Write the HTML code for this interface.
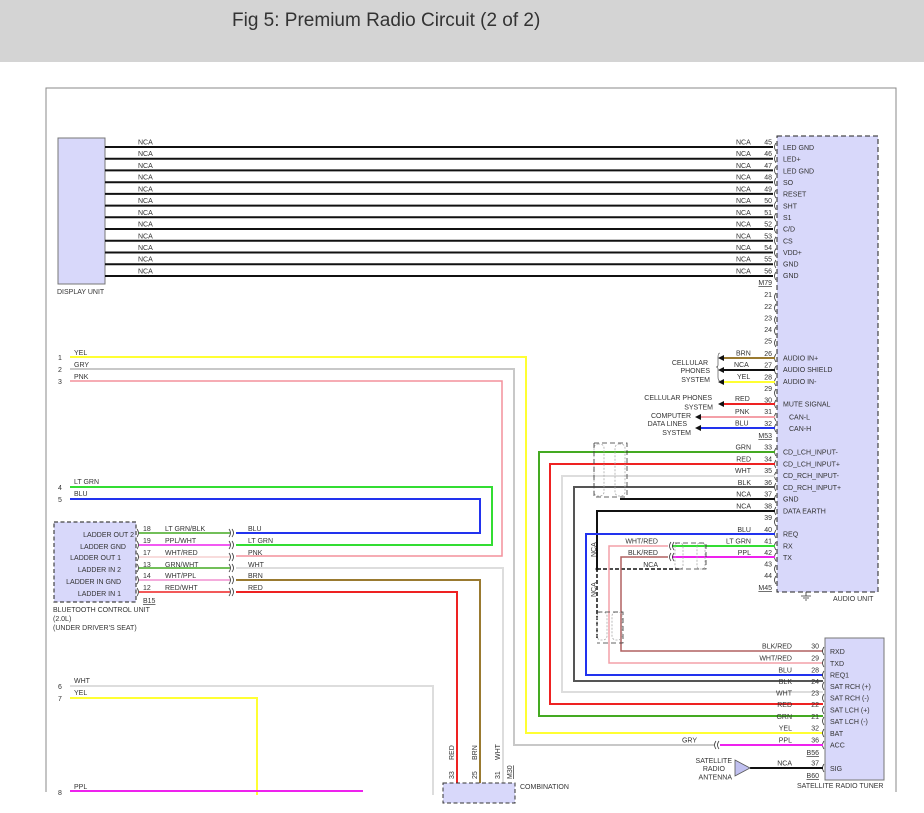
<!DOCTYPE html>
<html><head><meta charset="utf-8"><style>
html,body{margin:0;padding:0;background:#fff;width:924px;height:813px;overflow:hidden}
.hd{position:absolute;left:0;top:0;width:924px;height:62px;background:#d4d4d4}
.hd span{position:absolute;left:232px;top:10px;font:19px "Liberation Sans",sans-serif;color:#333}
svg{position:absolute;left:0;top:0}
text{font-family:"Liberation Sans",sans-serif;font-size:7px;fill:#333}
.e{text-anchor:end}
</style></head><body>
<div class="hd"><span>Fig 5: Premium Radio Circuit (2 of 2)</span></div>
<svg width="924" height="813" viewBox="0 0 924 813">
<path d="M46 792V88H896V792" fill="none" stroke="#888" stroke-width="1"/>
<rect x="58" y="138" width="47" height="146" fill="#d8d8fa" stroke="#777"/>
<text x="57" y="294">DISPLAY UNIT</text>
<g stroke="#111" stroke-width="2">
<path d="M105 147H773M105 158.7H773M105 170.4H773M105 182.2H773M105 193.9H773M105 205.6H773M105 217.3H773M105 229H773M105 240.8H773M105 252.5H773M105 264.2H773M105 276H773"/>
</g>
<rect x="777" y="136" width="101" height="456" fill="#d8d8fa" stroke="#222" stroke-dasharray="5,3"/>
<g>
<text x="138" y="144.5">NCA</text><text x="138" y="156">NCA</text><text x="138" y="168">NCA</text><text x="138" y="179.5">NCA</text><text x="138" y="191.5">NCA</text><text x="138" y="203">NCA</text><text x="138" y="215">NCA</text><text x="138" y="226.5">NCA</text><text x="138" y="238.5">NCA</text><text x="138" y="250">NCA</text><text x="138" y="261.5">NCA</text><text x="138" y="273.5">NCA</text>
<text x="736" y="144.5">NCA</text><text x="736" y="156">NCA</text><text x="736" y="168">NCA</text><text x="736" y="179.5">NCA</text><text x="736" y="191.5">NCA</text><text x="736" y="203">NCA</text><text x="736" y="215">NCA</text><text x="736" y="226.5">NCA</text><text x="736" y="238.5">NCA</text><text x="736" y="250">NCA</text><text x="736" y="261.5">NCA</text><text x="736" y="273.5">NCA</text>
<text x="772" y="144.5" class="e">45</text><text x="772" y="156" class="e">46</text><text x="772" y="168" class="e">47</text><text x="772" y="179.5" class="e">48</text><text x="772" y="191.5" class="e">49</text><text x="772" y="203" class="e">50</text><text x="772" y="215" class="e">51</text><text x="772" y="226.5" class="e">52</text><text x="772" y="238.5" class="e">53</text><text x="772" y="250" class="e">54</text><text x="772" y="261.5" class="e">55</text><text x="772" y="273.5" class="e">56</text>
<text x="772" y="285" class="e" text-decoration="underline">M79</text>
<text x="772" y="297" class="e">21</text><text x="772" y="309" class="e">22</text><text x="772" y="320.5" class="e">23</text><text x="772" y="332" class="e">24</text><text x="772" y="343.5" class="e">25</text>
<text x="772" y="356" class="e">26</text><text x="772" y="367.5" class="e">27</text><text x="772" y="379.5" class="e">28</text><text x="772" y="391" class="e">29</text><text x="772" y="402.5" class="e">30</text><text x="772" y="414" class="e">31</text><text x="772" y="426" class="e">32</text>
<text x="772" y="438" class="e" text-decoration="underline">M53</text>
<text x="772" y="449.5" class="e">33</text><text x="772" y="461.5" class="e">34</text><text x="772" y="473" class="e">35</text><text x="772" y="485" class="e">36</text><text x="772" y="496.5" class="e">37</text><text x="772" y="508.5" class="e">38</text><text x="772" y="520" class="e">39</text><text x="772" y="532" class="e">40</text><text x="772" y="543.5" class="e">41</text><text x="772" y="555" class="e">42</text><text x="772" y="566.5" class="e">43</text><text x="772" y="578" class="e">44</text>
<text x="772" y="590" class="e" text-decoration="underline">M45</text>
<text x="783" y="150">LED GND</text><text x="783" y="161.5">LED+</text><text x="783" y="173.5">LED GND</text><text x="783" y="185">SO</text><text x="783" y="196.5">RESET</text><text x="783" y="208.5">SHT</text><text x="783" y="220">S1</text><text x="783" y="231.5">C/D</text><text x="783" y="243.5">CS</text><text x="783" y="255">VDD+</text><text x="783" y="266.5">GND</text><text x="783" y="278">GND</text>
<text x="783" y="360.5">AUDIO IN+</text><text x="783" y="372">AUDIO SHIELD</text><text x="783" y="384">AUDIO IN-</text><text x="783" y="406.5">MUTE SIGNAL</text><text x="789" y="419.5">CAN-L</text><text x="789" y="431">CAN-H</text>
<text x="783" y="454.5">CD_LCH_INPUT-</text><text x="783" y="466.5">CD_LCH_INPUT+</text><text x="783" y="478">CD_RCH_INPUT-</text><text x="783" y="490">CD_RCH_INPUT+</text><text x="783" y="501.5">GND</text><text x="783" y="513.5">DATA EARTH</text><text x="783" y="536.5">REQ</text><text x="783" y="548.5">RX</text><text x="783" y="560">TX</text>
<text x="833" y="601">AUDIO UNIT</text>
</g>
<g fill="none" stroke="#333" stroke-width="0.8">
<path d="M776 143q-3 4 0 8M776 154.7q-3 4 0 8M776 166.4q-3 4 0 8M776 178q-3 4 0 8M776 190q-3 4 0 8M776 201.6q-3 4 0 8M776 213.3q-3 4 0 8M776 225q-3 4 0 8M776 236.8q-3 4 0 8M776 248.5q-3 4 0 8M776 260q-3 4 0 8M776 272q-3 4 0 8"/>
<path d="M776 293q-3 4 0 8M776 304q-3 4 0 8M776 316q-3 4 0 8M776 327q-3 4 0 8M776 339q-3 4 0 8M776 354q-3 4 0 8M776 366q-3 4 0 8M776 378q-3 4 0 8M776 389q-3 4 0 8M776 400q-3 4 0 8M776 413q-3 4 0 8M776 424q-3 4 0 8M776 448q-3 4 0 8M776 460q-3 4 0 8M776 472q-3 4 0 8M776 483q-3 4 0 8M776 495q-3 4 0 8M776 507q-3 4 0 8M776 518q-3 4 0 8M776 530q-3 4 0 8M776 542q-3 4 0 8M776 553q-3 4 0 8M776 565q-3 4 0 8M776 576q-3 4 0 8"/>
</g>
<path d="M806 592v4M801 596h10M803 598h6M805 600h2" stroke="#333" stroke-width="0.8"/>
<path d="M724 358H775" stroke="#9a7a30" stroke-width="2"/>
<path d="M724 370H775" stroke="#111" stroke-width="2"/>
<path d="M724 382H775" stroke="#ffff33" stroke-width="2"/>
<path d="M724 404H775" stroke="#ee2222" stroke-width="2"/>
<path d="M700 417H775" stroke="#f4a0a8" stroke-width="2"/>
<path d="M700 428H775" stroke="#2233ee" stroke-width="2"/>
<path d="M718 358l6-3v6zM718 370l6-3v6zM718 382l6-3v6zM718 404l6-3v6zM695 417l6-3v6zM695 428l6-3v6z" fill="#111"/>
<path d="M720 353q-2 0 -2 4v8q0 2 -2 2q2 0 2 2v8q0 4 2 4" fill="none" stroke="#333" stroke-width="0.6"/>
<text x="736" y="355.5">BRN</text><text x="734" y="367">NCA</text><text x="737" y="379">YEL</text><text x="735" y="401">RED</text><text x="735" y="414">PNK</text><text x="735" y="425.5">BLU</text>
<text x="708" y="365" class="e">CELLULAR</text><text x="710" y="373" class="e">PHONES</text><text x="710" y="382" class="e">SYSTEM</text>
<text x="712" y="400" class="e">CELLULAR PHONES</text><text x="713" y="409.5" class="e">SYSTEM</text>
<text x="691" y="418" class="e">COMPUTER</text><text x="687" y="426" class="e">DATA LINES</text><text x="691" y="435" class="e">SYSTEM</text>
<text x="58" y="360">1</text><text x="58" y="372">2</text><text x="58" y="384">3</text>
<text x="74" y="355">YEL</text><text x="74" y="367">GRY</text><text x="74" y="379">PNK</text>
<path d="M70 357H526V733H823" fill="none" stroke="#ffff33" stroke-width="2"/>
<path d="M70 369H514V745H714" fill="none" stroke="#c8c8c8" stroke-width="2"/>
<path d="M70 381H502V556H236" fill="none" stroke="#f4909c" stroke-width="1.5"/>
<text x="58" y="490">4</text><text x="58" y="502">5</text>
<text x="74" y="484">LT GRN</text><text x="74" y="496">BLU</text>
<path d="M70 487H492V545H236" fill="none" stroke="#33dd33" stroke-width="2"/>
<path d="M70 499H480V533H236" fill="none" stroke="#2233ee" stroke-width="2"/>
<rect x="54" y="522" width="82" height="80" fill="#d8d8fa" stroke="#444" stroke-dasharray="4,2.5" stroke-width="1.2"/>
<text x="134" y="537" class="e">LADDER OUT 2</text><text x="126" y="549" class="e">LADDER GND</text><text x="121" y="560" class="e">LADDER OUT 1</text><text x="121" y="572" class="e">LADDER IN 2</text><text x="121" y="584" class="e">LADDER IN GND</text><text x="121" y="596" class="e">LADDER IN 1</text>
<text x="53" y="612">BLUETOOTH CONTROL UNIT</text><text x="53" y="621">(2.0L)</text><text x="53" y="630">(UNDER DRIVER'S SEAT)</text>
<text x="143" y="603" text-decoration="underline">B15</text>
<path d="M139 533H230" stroke="#44aa22" stroke-width="1.5"/>
<path d="M139 545H230" stroke="#ee22ee" stroke-width="1.5"/>
<path d="M139 557H230" stroke="#f6d0d0" stroke-width="1.5"/>
<path d="M139 568H230" stroke="#44aa22" stroke-width="1.5"/>
<path d="M139 580H230" stroke="#f090d0" stroke-width="1.5"/>
<path d="M139 592H230" stroke="#ee2222" stroke-width="1.5"/>
<path d="M236 568H503V785" fill="none" stroke="#dddddd" stroke-width="2"/>
<path d="M236 580H480V785" fill="none" stroke="#9a7a30" stroke-width="2"/>
<path d="M236 592H457V785" fill="none" stroke="#ee2222" stroke-width="2"/>
<g fill="none" stroke="#333" stroke-width="0.8">
<path d="M137 529q3 4 0 8M137 541q3 4 0 8M137 553q3 4 0 8M137 564q3 4 0 8M137 576q3 4 0 8M137 588q3 4 0 8"/>
<path d="M229 529q3 4 0 8M232 529q3 4 0 8M229 541q3 4 0 8M232 541q3 4 0 8M229 553q3 4 0 8M232 553q3 4 0 8M229 564q3 4 0 8M232 564q3 4 0 8M229 576q3 4 0 8M232 576q3 4 0 8M229 588q3 4 0 8M232 588q3 4 0 8"/>
</g>
<text x="143" y="531">18</text><text x="143" y="543">19</text><text x="143" y="555">17</text><text x="143" y="567">13</text><text x="143" y="578">14</text><text x="143" y="590">12</text>
<text x="165" y="531">LT GRN/BLK</text><text x="165" y="543">PPL/WHT</text><text x="165" y="555">WHT/RED</text><text x="165" y="567">GRN/WHT</text><text x="165" y="578">WHT/PPL</text><text x="165" y="590">RED/WHT</text>
<text x="248" y="531">BLU</text><text x="248" y="543">LT GRN</text><text x="248" y="555">PNK</text><text x="248" y="567">WHT</text><text x="248" y="578">BRN</text><text x="248" y="590">RED</text>
<text x="58" y="689">6</text><text x="58" y="701">7</text><text x="58" y="795">8</text>
<text x="74" y="683">WHT</text><text x="74" y="695">YEL</text><text x="74" y="789">PPL</text>
<path d="M70 686H433V795" fill="none" stroke="#dddddd" stroke-width="2"/>
<path d="M70 698H257V795" fill="none" stroke="#ffff33" stroke-width="2"/>
<path d="M70 791H363" stroke="#ee22ee" stroke-width="2"/>
<path d="M775 452H539V716H823" fill="none" stroke="#44aa22" stroke-width="2"/>
<path d="M775 464H550V704H823" fill="none" stroke="#ee2222" stroke-width="2"/>
<path d="M775 476H562V692H823" fill="none" stroke="#dddddd" stroke-width="2"/>
<path d="M775 487H574V681H823" fill="none" stroke="#555" stroke-width="2"/>
<path d="M775 499H620" fill="none" stroke="#111" stroke-width="2"/>
<path d="M775 511H597V568" fill="none" stroke="#111" stroke-width="2"/>
<path d="M597 568V640" fill="none" stroke="#111" stroke-width="1.5" stroke-dasharray="4,2"/>
<path d="M597 569H680" fill="none" stroke="#111" stroke-width="1.5" stroke-dasharray="4,2"/>
<circle cx="597" cy="569" r="1.5" fill="#111"/>
<path d="M775 534H586V675H823" fill="none" stroke="#2233ee" stroke-width="2"/>
<path d="M775 546H672" stroke="#33dd33" stroke-width="2"/>
<path d="M775 557H672" stroke="#ee22ee" stroke-width="2"/>
<path d="M668 546H609V663H823" fill="none" stroke="#f4a0a8" stroke-width="1.5"/>
<path d="M668 557H621V651H823" fill="none" stroke="#b06060" stroke-width="1.5"/>
<g fill="none" stroke="#aaa" stroke-width="0.8" stroke-dasharray="2,1.5">
<rect x="594" y="444" width="10" height="52" rx="4"/><rect x="615" y="444" width="10" height="52" rx="4"/>
<rect x="675" y="543" width="8" height="26" rx="3"/><rect x="697" y="543" width="8" height="26" rx="3"/>
<rect x="597" y="612" width="10" height="28" rx="4"/><rect x="612" y="612" width="10" height="28" rx="4"/>
</g>
<path d="M594 443H627V497M594 443V497H627" fill="none" stroke="#333" stroke-width="0.8" stroke-dasharray="5,3"/>
<path d="M675 543H706V569H675" fill="none" stroke="#333" stroke-width="0.8" stroke-dasharray="5,3"/>
<path d="M597 612H623V643H597" fill="none" stroke="#333" stroke-width="0.8" stroke-dasharray="5,3"/>
<path d="M671 542q-3 4 0 8M674 542q-3 4 0 8M671 553q-3 4 0 8M674 553q-3 4 0 8" fill="none" stroke="#333" stroke-width="0.8"/>
<text x="751" y="449.5" class="e">GRN</text><text x="751" y="461.5" class="e">RED</text><text x="751" y="473" class="e">WHT</text><text x="751" y="485" class="e">BLK</text><text x="751" y="496.5" class="e">NCA</text><text x="751" y="508.5" class="e">NCA</text><text x="751" y="532" class="e">BLU</text><text x="751" y="543.5" class="e">LT GRN</text><text x="751" y="555" class="e">PPL</text>
<text x="658" y="543.5" class="e">WHT/RED</text><text x="658" y="555" class="e">BLK/RED</text><text x="658" y="567" class="e">NCA</text>
<text transform="translate(596 557) rotate(-90)">NCA</text>
<text transform="translate(596 597) rotate(-90)">NCA</text>
<rect x="825" y="638" width="59" height="142" fill="#d8d8fa" stroke="#777"/>
<g fill="none" stroke="#333" stroke-width="0.8">
<path d="M824 647q-3 4 0 8M824 659q-3 4 0 8M824 671q-3 4 0 8M824 682q-3 4 0 8M824 694q-3 4 0 8M824 706q-3 4 0 8M824 717q-3 4 0 8M824 729q-3 4 0 8M824 741q-3 4 0 8M824 764q-3 4 0 8"/>
<path d="M716 741q-3 4 0 8M719 741q-3 4 0 8"/>
</g>
<path d="M720 745H823" stroke="#ee22ee" stroke-width="2"/>
<path d="M750 768H823" stroke="#111" stroke-width="2"/>
<path d="M735 760L750 768L735 776Z" fill="#c0c0f0" stroke="#555" stroke-width="0.8"/>
<text x="830" y="654">RXD</text><text x="830" y="666">TXD</text><text x="830" y="677.5">REQ1</text><text x="830" y="689">SAT RCH (+)</text><text x="830" y="700.5">SAT RCH (-)</text><text x="830" y="712.5">SAT LCH (+)</text><text x="830" y="724">SAT LCH (-)</text><text x="830" y="736">BAT</text><text x="830" y="747.5">ACC</text><text x="830" y="771">SIG</text>
<text x="819" y="648.5" class="e">30</text><text x="819" y="660.5" class="e">29</text><text x="819" y="672.5" class="e">28</text><text x="819" y="684" class="e">24</text><text x="819" y="695.5" class="e">23</text><text x="819" y="707" class="e">22</text><text x="819" y="719" class="e">21</text><text x="819" y="730.5" class="e">32</text><text x="819" y="742.5" class="e">36</text><text x="819" y="755" class="e" text-decoration="underline">B56</text><text x="819" y="765.5" class="e">37</text><text x="819" y="778" class="e" text-decoration="underline">B60</text>
<text x="792" y="648.5" class="e">BLK/RED</text><text x="792" y="660.5" class="e">WHT/RED</text><text x="792" y="672.5" class="e">BLU</text><text x="792" y="684" class="e">BLK</text><text x="792" y="695.5" class="e">WHT</text><text x="792" y="707" class="e">RED</text><text x="792" y="719" class="e">GRN</text><text x="792" y="730.5" class="e">YEL</text><text x="792" y="742.5" class="e">PPL</text><text x="792" y="765.5" class="e">NCA</text>
<text x="697" y="742.5" class="e">GRY</text>
<text x="732" y="763" class="e">SATELLITE</text><text x="725" y="771" class="e">RADIO</text><text x="732" y="779.5" class="e">ANTENNA</text>
<text x="797" y="788">SATELLITE RADIO TUNER</text>
<rect x="443" y="783" width="72" height="20" fill="#d8d8fa" stroke="#333" stroke-dasharray="4,2.5"/>
<text x="520" y="789">COMBINATION</text>
<text transform="translate(454 779) rotate(-90)">33</text><text transform="translate(477 779) rotate(-90)">25</text><text transform="translate(500 779) rotate(-90)">31</text>
<text transform="translate(454 760) rotate(-90)">RED</text><text transform="translate(477 760) rotate(-90)">BRN</text><text transform="translate(500 760) rotate(-90)">WHT</text>
<text transform="translate(512 779) rotate(-90)" text-decoration="underline">M30</text>
</svg>
</body></html>
